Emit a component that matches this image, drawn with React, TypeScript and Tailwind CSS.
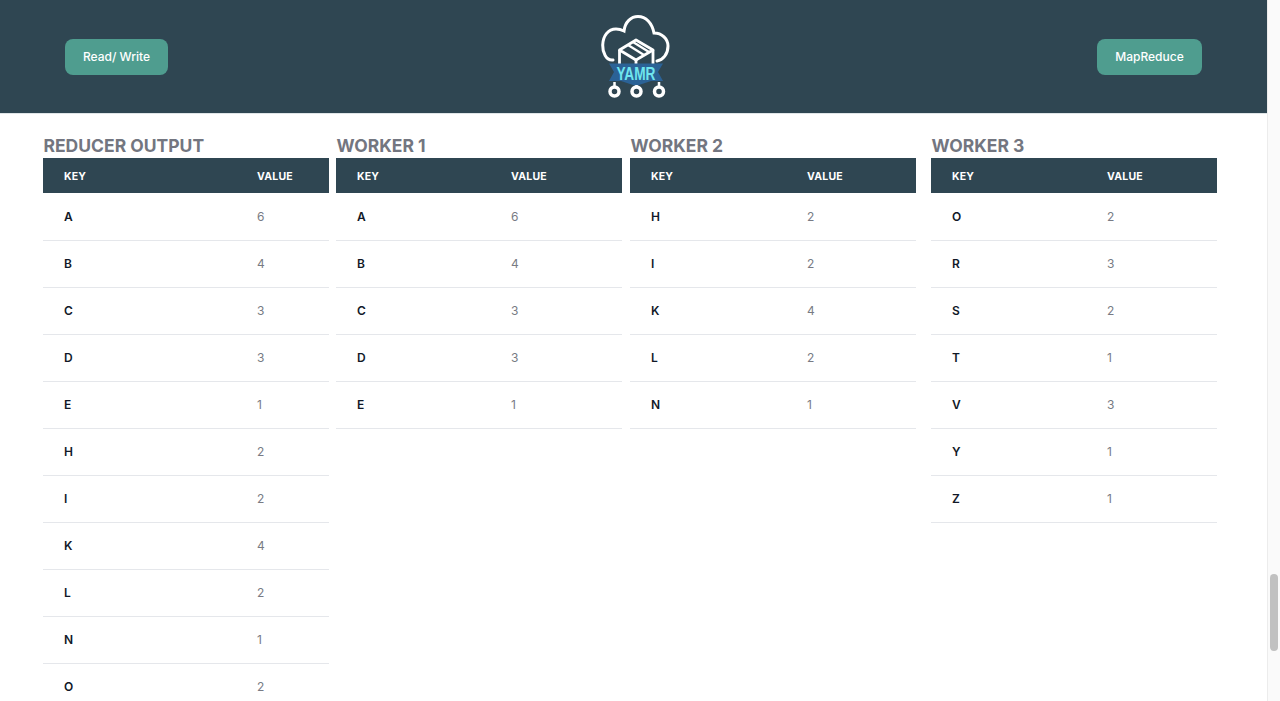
const columns = [
  {
    title: 'REDUCER OUTPUT',
    keyWidth: 'w-[214px]',
    gap: '',
    rows: [['A', 6], ['B', 4], ['C', 3], ['D', 3], ['E', 1], ['H', 2], ['I', 2], ['K', 4], ['L', 2], ['N', 1], ['O', 2]],
  },
  {
    title: 'WORKER 1',
    keyWidth: 'w-[175px]',
    gap: 'ml-[7px]',
    rows: [['A', 6], ['B', 4], ['C', 3], ['D', 3], ['E', 1]],
  },
  {
    title: 'WORKER 2',
    keyWidth: 'w-[177px]',
    gap: 'ml-[8px]',
    rows: [['H', 2], ['I', 2], ['K', 4], ['L', 2], ['N', 1]],
  },
  {
    title: 'WORKER 3',
    keyWidth: 'w-[176px]',
    gap: 'ml-[15px]',
    rows: [['O', 2], ['R', 3], ['S', 2], ['T', 1], ['V', 3], ['Y', 1], ['Z', 1]],
  },
];

const Logo = () => (
  <svg viewBox="0 0 80 92" className="h-[92px] w-[80px]" fill="none" aria-label="YAMR logo">
    <path
      d="M20 49 C13 50 9.500 41 9.700 34 C10 25 15 18 23 18 C26 18 29 19 31 20 C32 11 38 5.500 45 5.500 C53 5.500 59 12 61 22 C69 22 75 28 75 35 C75 43 70 49 64 50"
      stroke="#fff"
      strokeWidth="3"
      strokeLinecap="round"
    />
    <path d="M26.500 39 L43 29 L60 39 L43 49 Z" stroke="#fff" strokeWidth="2.800" strokeLinejoin="round" />
    <path d="M26.500 39 V54 M60 39 V54 M43 49 V54" stroke="#fff" strokeWidth="2.800" />
    <path d="M35 34 L51 44 M40 31 L56 41" stroke="#fff" strokeWidth="2.200" />
    <path d="M16 52.500 H70 L65 61 L70 70 H58 L43 75 L28 70 H16 L21 61 Z" fill="#2b6296" />
    <text
      x="43"
      y="69"
      textAnchor="middle"
      fill="#6fe6ee"
      fontFamily="'Liberation Sans', sans-serif"
      fontSize="19"
      fontWeight="700"
      textLength="39"
      lengthAdjust="spacingAndGlyphs"
    >
      YAMR
    </text>
    <path d="M21.500 71 V76 M43.500 74 V76 M66 71 V76" stroke="#fff" strokeWidth="2.500" />
    <circle cx="21.500" cy="80.500" r="4.500" stroke="#fff" strokeWidth="3.500" />
    <circle cx="43.500" cy="80.500" r="4.500" stroke="#fff" strokeWidth="3.500" />
    <circle cx="66" cy="80.500" r="4.500" stroke="#fff" strokeWidth="3.500" />
  </svg>
);

const HeaderButton = ({ label, className }: { label: string; className: string }) => (
  <button className={`h-9 rounded-lg bg-[#4f9d8f] text-[12px] font-medium text-white ${className}`}>
    {label}
  </button>
);

export default function App() {
  return (
    <div className="flex h-[701px] w-full overflow-hidden bg-white font-['Inter',sans-serif] antialiased">
      <div className="min-w-0 flex-1">
        <header className="flex h-[114px] items-center justify-between border-b border-[#dfe5e7] bg-[#2f4652] pr-[65px] pl-[65px]">
          <HeaderButton label="Read/ Write" className="w-[103px]" />
          <Logo />
          <HeaderButton label="MapReduce" className="w-[105px]" />
        </header>

        <main className="flex pt-[20px] pl-[43px]">
          {columns.map((col) => (
            <section key={col.title} className={`w-[286px] shrink-0 ${col.gap}`}>
              <h2 className="h-[24px] pt-px pl-[0.5px] text-[17.500px] leading-[22px] font-bold text-[#737680]">
                {col.title}
              </h2>
              <table className="w-full table-fixed border-collapse text-left">
                <thead className="bg-[#2f4652] text-[10.500px] font-bold tracking-[0.02em] text-white">
                  <tr className="h-[35px]">
                    <th className={`pt-[2px] pl-[21px] font-bold ${col.keyWidth}`}>KEY</th>
                    <th className="pt-[2px] font-bold">VALUE</th>
                  </tr>
                </thead>
                <tbody className="text-[12px]">
                  {col.rows.map(([key, value]) => (
                    <tr key={key} className="h-[47px] border-b border-[#e5e7eb]">
                      <td className="pt-px pl-[21px] font-semibold text-[#111827]">{key}</td>
                      <td className="pt-px text-[#787b84]">{value}</td>
                    </tr>
                  ))}
                </tbody>
              </table>
            </section>
          ))}
        </main>
      </div>

      <aside className="w-[13px] shrink-0 border-l border-[#ececec] bg-[#fafafa] pt-[574px] pl-[2px]">
        <div className="h-[77px] w-[8px] rounded-full bg-[#c1c1c1]" />
      </aside>
    </div>
  );
}
